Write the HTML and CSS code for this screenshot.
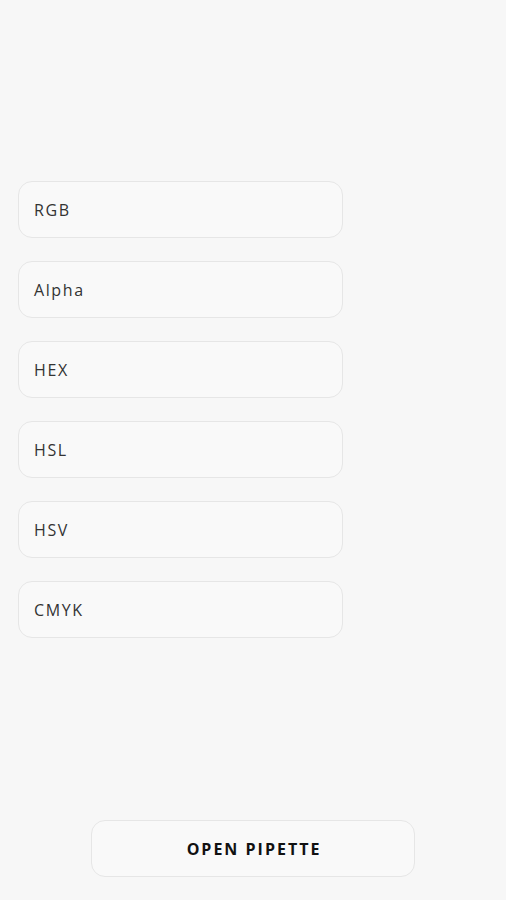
FILE: index.html
```html
<!DOCTYPE html>
<html>
<head>
<meta charset="utf-8">
<link rel="stylesheet" href="styles.css">
</head>
<body>
<div class="page">
  <div class="fields">
    <div class="field">RGB</div>
    <div class="field">Alpha</div>
    <div class="field">HEX</div>
    <div class="field">HSL</div>
    <div class="field">HSV</div>
    <div class="field">CMYK</div>
  </div>
  <div class="footer">
    <button class="btn">OPEN PIPETTE</button>
  </div>
</div>
</body>
</html>
```
FILE: styles.css
```css
html, body {
  margin: 0;
  padding: 0;
  background: #f7f7f7;
}
.page {
  width: 506px;
  height: 900px;
  display: flex;
  flex-direction: column;
  font-family: "Open Sans", "Liberation Sans", sans-serif;
}
.fields {
  display: flex;
  flex-direction: column;
  gap: 23px;
  padding: 181px 0 0 18px;
}
.field {
  box-sizing: border-box;
  width: 325px;
  height: 57px;
  border: 1.5px solid #e6e6e6;
  border-radius: 14px;
  background: #f9f9f9;
  display: flex;
  align-items: center;
  padding-left: 15px;
  font-size: 16px;
  color: #333;
  letter-spacing: 1.6px;
}
.footer {
  margin-top: auto;
  display: flex;
  justify-content: center;
  padding: 0 0 23px 0;
}
.btn {
  box-sizing: border-box;
  width: 324px;
  height: 57px;
  border: 1.5px solid #e6e6e6;
  border-radius: 14px;
  background: #f9f9f9;
  font-family: "Open Sans", "Liberation Sans", sans-serif;
  font-weight: 700;
  font-size: 16px;
  letter-spacing: 2px;
  color: #111;
  padding: 0 0 0 2px;
}
```
